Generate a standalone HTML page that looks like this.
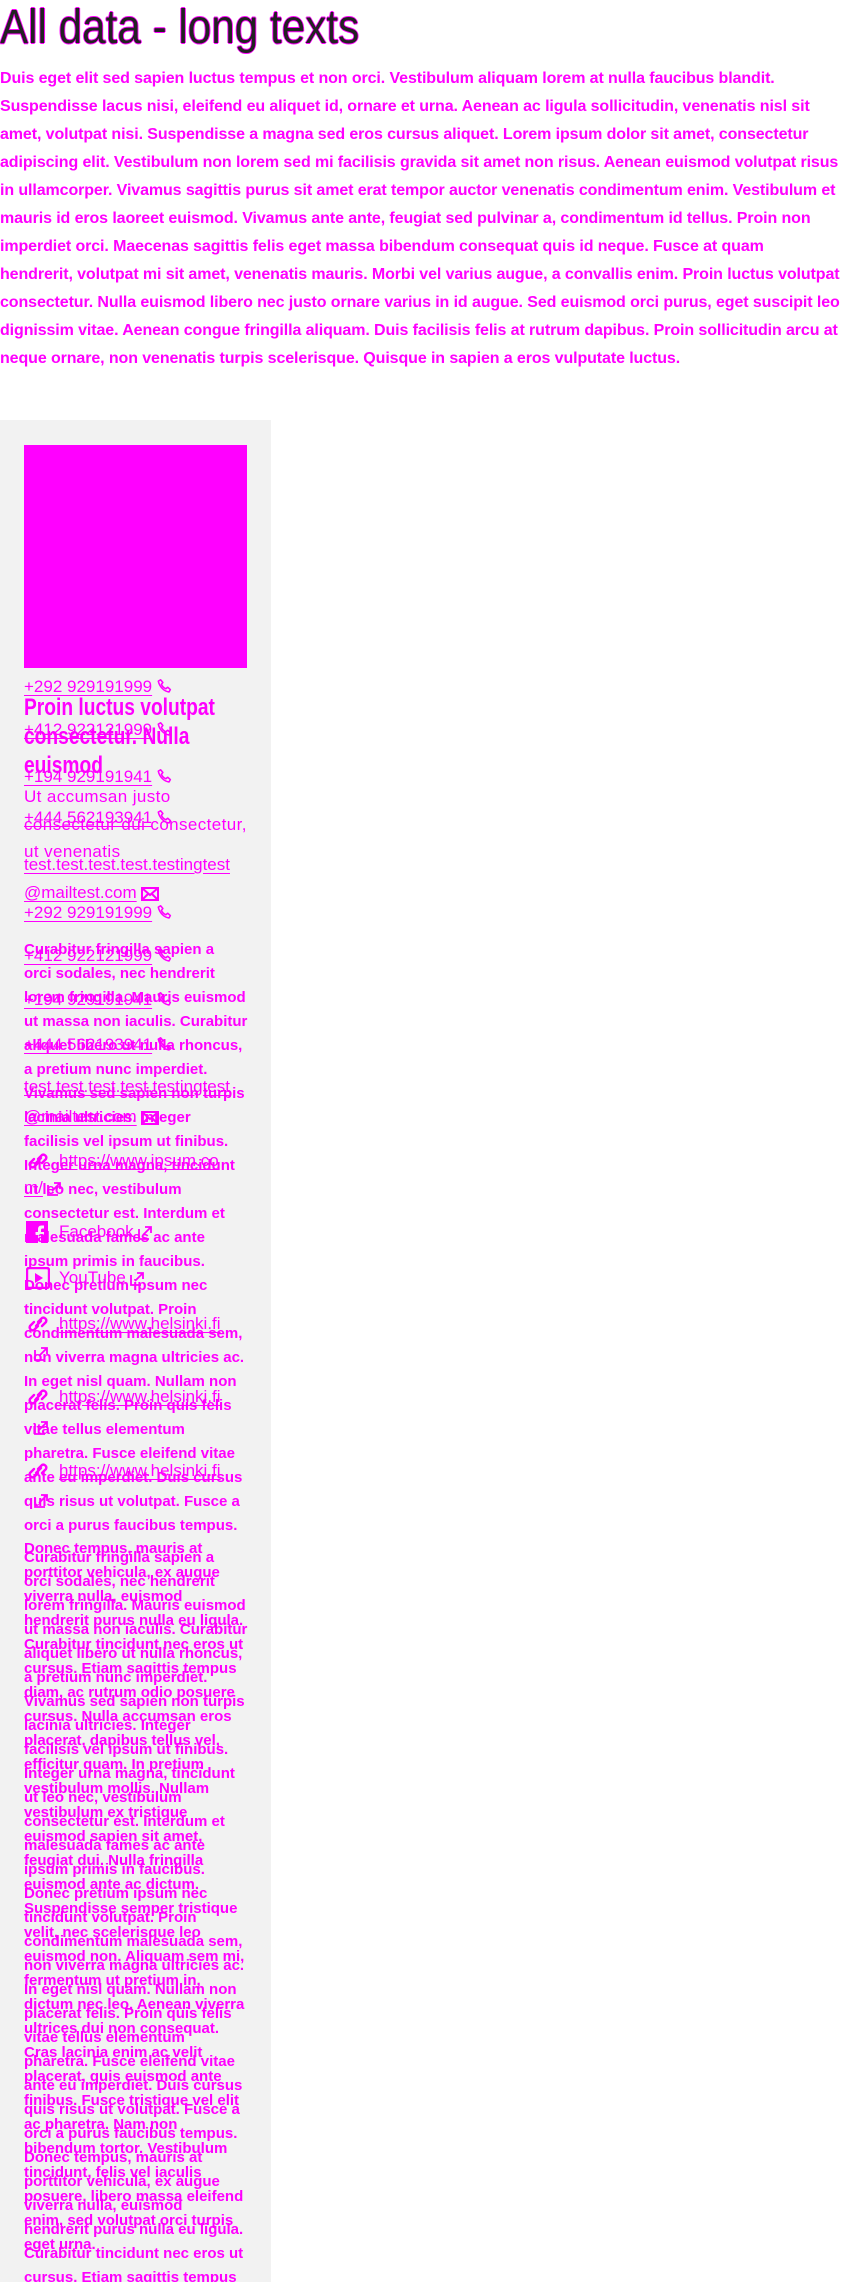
<!DOCTYPE html>
<html><head><meta charset="utf-8">
<style>
*{margin:0;padding:0;box-sizing:border-box}
html,body{width:860px;height:2282px;overflow:hidden;background:#fff}
body{position:relative;font-family:"Liberation Sans",sans-serif;color:#ff00ff}
h1{position:absolute;left:0;top:0;font-size:48px;font-weight:normal;line-height:56px;color:#222;white-space:nowrap;transform:scaleX(0.88);transform-origin:left top;
text-shadow:1px 0 #f0f,-1px 0 #f0f,0 1px #f0f,0 -1px #f0f}
.p{position:absolute;left:0;top:65px;font-size:16px;font-weight:bold;line-height:28px;white-space:nowrap;letter-spacing:-0.1px}
.card{position:absolute;left:0;top:420px;width:271px;height:1862px;background:#f2f2f2}
.img{position:absolute;left:24px;top:445px;width:223px;height:223px;background:#ff00ff}
.t{position:absolute;left:24px;white-space:nowrap}
.a{font-size:15px;line-height:24px;font-weight:bold}
.ttl{font-size:24px;font-weight:bold;line-height:29px;transform:scaleX(0.8);transform-origin:left top}
.ut{font-size:17px;line-height:27.5px;letter-spacing:0.4px}
.k{position:absolute;left:24px;font-size:17px;line-height:24px;height:24px;white-space:nowrap}
.k u{text-decoration:underline;text-underline-offset:3px}
.k svg{vertical-align:-3px;margin-left:4px}
.ico{position:absolute;left:26px}
</style></head><body>
<h1>All data - long texts</h1>
<div class="p">
Duis eget elit sed sapien luctus tempus et non orci. Vestibulum aliquam lorem at nulla faucibus blandit.<br>
Suspendisse lacus nisi, eleifend eu aliquet id, ornare et urna. Aenean ac ligula sollicitudin, venenatis nisl sit<br>
amet, volutpat nisi. Suspendisse a magna sed eros cursus aliquet. Lorem ipsum dolor sit amet, consectetur<br>
adipiscing elit. Vestibulum non lorem sed mi facilisis gravida sit amet non risus. Aenean euismod volutpat risus<br>
in ullamcorper. Vivamus sagittis purus sit amet erat tempor auctor venenatis condimentum enim. Vestibulum et<br>
mauris id eros laoreet euismod. Vivamus ante ante, feugiat sed pulvinar a, condimentum id tellus. Proin non<br>
imperdiet orci. Maecenas sagittis felis eget massa bibendum consequat quis id neque. Fusce at quam<br>
hendrerit, volutpat mi sit amet, venenatis mauris. Morbi vel varius augue, a convallis enim. Proin luctus volutpat<br>
consectetur. Nulla euismod libero nec justo ornare varius in id augue. Sed euismod orci purus, eget suscipit leo<br>
dignissim vitae. Aenean congue fringilla aliquam. Duis facilisis felis at rutrum dapibus. Proin sollicitudin arcu at<br>
neque ornare, non venenatis turpis scelerisque. Quisque in sapien a eros vulputate luctus.
</div>
<div class="card"></div>
<div class="img"></div>

<div class="t ttl" style="top:693px">Proin luctus volutpat<br>consectetur. Nulla<br>euismod</div>
<div class="t ut" style="top:783px">Ut accumsan justo<br>consectetur dui consectetur,<br>ut venenatis</div>

<div class="k" style="top:675px"><u>+292 929191999</u><svg width="17" height="17" viewBox="0 0 24 24"><path d="M6.5 2.5l3.2 3.8-2.1 2.6c1.3 2.9 3.4 5 6.3 6.3l2.6-2.1 3.8 3.2-1.9 3.4C11.5 19 5 12.5 3.2 4.4z" fill="none" stroke="#f0f" stroke-width="2.2" stroke-linejoin="round"/></svg></div>
<div class="k" style="top:718px"><u>+412 922121999</u><svg width="17" height="17" viewBox="0 0 24 24"><path d="M6.5 2.5l3.2 3.8-2.1 2.6c1.3 2.9 3.4 5 6.3 6.3l2.6-2.1 3.8 3.2-1.9 3.4C11.5 19 5 12.5 3.2 4.4z" fill="none" stroke="#f0f" stroke-width="2.2" stroke-linejoin="round"/></svg></div>
<div class="k" style="top:765px"><u>+194 929191941</u><svg width="17" height="17" viewBox="0 0 24 24"><path d="M6.5 2.5l3.2 3.8-2.1 2.6c1.3 2.9 3.4 5 6.3 6.3l2.6-2.1 3.8 3.2-1.9 3.4C11.5 19 5 12.5 3.2 4.4z" fill="none" stroke="#f0f" stroke-width="2.2" stroke-linejoin="round"/></svg></div>
<div class="k" style="top:806px"><u>+444 562193941</u><svg width="17" height="17" viewBox="0 0 24 24"><path d="M6.5 2.5l3.2 3.8-2.1 2.6c1.3 2.9 3.4 5 6.3 6.3l2.6-2.1 3.8 3.2-1.9 3.4C11.5 19 5 12.5 3.2 4.4z" fill="none" stroke="#f0f" stroke-width="2.2" stroke-linejoin="round"/></svg></div>
<div class="k" style="top:853px"><u>test.test.test.test.testingtest</u></div>
<div class="k" style="top:881px"><u>@mailtest.com</u><svg width="18" height="14" viewBox="0 0 18 14"><rect x="1" y="1" width="16" height="12" fill="none" stroke="#f0f" stroke-width="2"/><path d="M1 1l8 7 8-7M1 13l6-6M17 13l-6-6" fill="none" stroke="#f0f" stroke-width="2"/></svg></div>
<div class="k" style="top:901px"><u>+292 929191999</u><svg width="17" height="17" viewBox="0 0 24 24"><path d="M6.5 2.5l3.2 3.8-2.1 2.6c1.3 2.9 3.4 5 6.3 6.3l2.6-2.1 3.8 3.2-1.9 3.4C11.5 19 5 12.5 3.2 4.4z" fill="none" stroke="#f0f" stroke-width="2.2" stroke-linejoin="round"/></svg></div>
<div class="k" style="top:944px"><u>+412 922121999</u><svg width="17" height="17" viewBox="0 0 24 24"><path d="M6.5 2.5l3.2 3.8-2.1 2.6c1.3 2.9 3.4 5 6.3 6.3l2.6-2.1 3.8 3.2-1.9 3.4C11.5 19 5 12.5 3.2 4.4z" fill="none" stroke="#f0f" stroke-width="2.2" stroke-linejoin="round"/></svg></div>
<div class="k" style="top:988px"><u>+194 929191941</u><svg width="17" height="17" viewBox="0 0 24 24"><path d="M6.5 2.5l3.2 3.8-2.1 2.6c1.3 2.9 3.4 5 6.3 6.3l2.6-2.1 3.8 3.2-1.9 3.4C11.5 19 5 12.5 3.2 4.4z" fill="none" stroke="#f0f" stroke-width="2.2" stroke-linejoin="round"/></svg></div>
<div class="k" style="top:1033px"><u>+444 562193941</u><svg width="17" height="17" viewBox="0 0 24 24"><path d="M6.5 2.5l3.2 3.8-2.1 2.6c1.3 2.9 3.4 5 6.3 6.3l2.6-2.1 3.8 3.2-1.9 3.4C11.5 19 5 12.5 3.2 4.4z" fill="none" stroke="#f0f" stroke-width="2.2" stroke-linejoin="round"/></svg></div>
<div class="k" style="top:1075px"><u>test.test.test.test.testingtest</u></div>
<div class="k" style="top:1105px"><u>@mailtest.com</u><svg width="18" height="14" viewBox="0 0 18 14"><rect x="1" y="1" width="16" height="12" fill="none" stroke="#f0f" stroke-width="2"/><path d="M1 1l8 7 8-7M1 13l6-6M17 13l-6-6" fill="none" stroke="#f0f" stroke-width="2"/></svg></div>

<svg class="ico" style="top:1151px" width="24" height="20" viewBox="0 0 24 20"><path d="M10 12l5-5M8 8l-4 4a3 3 0 004 4l4-4M16 12l4-4a3 3 0 00-4-4l-4 4" fill="none" stroke="#f0f" stroke-width="2.4" stroke-linecap="round"/></svg>
<div class="k" style="top:1149px;left:59px"><u>https://www.ipsum.co</u></div>
<div class="k" style="top:1176px"><u>m/</u><svg width="14" height="14" viewBox="0 0 14 14"><path d="M1 3v10h10M5 9l8-8M7 1h6v6" fill="none" stroke="#f0f" stroke-width="1.8"/></svg></div>
<svg class="ico" style="top:1221px" width="22" height="22" viewBox="0 0 22 22"><rect width="22" height="22" fill="#f0f"/><path d="M15 22v-8h3v-3h-3V9c0-1 .5-1.5 1.5-1.5H18V4.5h-2.5C13 4.5 12 6 12 8.5V11H9.5v3H12v8" fill="#f2f2f2"/></svg>
<div class="k" style="top:1220px;left:59px">Facebook<svg width="14" height="14" viewBox="0 0 14 14"><path d="M1 3v10h10M5 9l8-8M7 1h6v6" fill="none" stroke="#f0f" stroke-width="1.8"/></svg></div>
<svg class="ico" style="top:1267px" width="24" height="22" viewBox="0 0 24 22"><rect x="1" y="1" width="22" height="20" rx="2" fill="none" stroke="#f0f" stroke-width="2.4"/><path d="M9 6v10l8-5z" fill="#f0f"/></svg>
<div class="k" style="top:1266px;left:59px">YouTube<svg width="14" height="14" viewBox="0 0 14 14"><path d="M1 3v10h10M5 9l8-8M7 1h6v6" fill="none" stroke="#f0f" stroke-width="1.8"/></svg></div>

<svg class="ico" style="top:1314px" width="24" height="20" viewBox="0 0 24 20"><path d="M10 12l5-5M8 8l-4 4a3 3 0 004 4l4-4M16 12l4-4a3 3 0 00-4-4l-4 4" fill="none" stroke="#f0f" stroke-width="2.4" stroke-linecap="round"/></svg>
<div class="k" style="top:1312px;left:59px"><u>https://www.helsinki.fi</u></div>
<div class="k" style="top:1341px;left:30px"><svg width="14" height="14" viewBox="0 0 14 14"><path d="M1 3v10h10M5 9l8-8M7 1h6v6" fill="none" stroke="#f0f" stroke-width="1.8"/></svg></div>
<svg class="ico" style="top:1387px" width="24" height="20" viewBox="0 0 24 20"><path d="M10 12l5-5M8 8l-4 4a3 3 0 004 4l4-4M16 12l4-4a3 3 0 00-4-4l-4 4" fill="none" stroke="#f0f" stroke-width="2.4" stroke-linecap="round"/></svg>
<div class="k" style="top:1385px;left:59px"><u>https://www.helsinki.fi</u></div>
<div class="k" style="top:1415px;left:30px"><svg width="14" height="14" viewBox="0 0 14 14"><path d="M1 3v10h10M5 9l8-8M7 1h6v6" fill="none" stroke="#f0f" stroke-width="1.8"/></svg></div>
<svg class="ico" style="top:1461px" width="24" height="20" viewBox="0 0 24 20"><path d="M10 12l5-5M8 8l-4 4a3 3 0 004 4l4-4M16 12l4-4a3 3 0 00-4-4l-4 4" fill="none" stroke="#f0f" stroke-width="2.4" stroke-linecap="round"/></svg>
<div class="k" style="top:1459px;left:59px"><u>https://www.helsinki.fi</u></div>
<div class="k" style="top:1488px;left:30px"><svg width="14" height="14" viewBox="0 0 14 14"><path d="M1 3v10h10M5 9l8-8M7 1h6v6" fill="none" stroke="#f0f" stroke-width="1.8"/></svg></div>

<div class="t a" style="top:938px">
Curabitur fringilla sapien a<br>orci sodales, nec hendrerit<br>lorem fringilla. Mauris euismod<br>ut massa non iaculis. Curabitur<br>aliquet libero ut nulla rhoncus,<br>a pretium nunc imperdiet.<br>Vivamus sed sapien non turpis<br>lacinia ultricies. Integer<br>facilisis vel ipsum ut finibus.<br>Integer urna magna, tincidunt<br>ut leo nec, vestibulum<br>consectetur est. Interdum et<br>malesuada fames ac ante<br>ipsum primis in faucibus.<br>Donec pretium ipsum nec<br>tincidunt volutpat. Proin<br>condimentum malesuada sem,<br>non viverra magna ultricies ac.<br>In eget nisl quam. Nullam non<br>placerat felis. Proin quis felis<br>vitae tellus elementum<br>pharetra. Fusce eleifend vitae<br>ante eu imperdiet. Duis cursus<br>quis risus ut volutpat. Fusce a<br>orci a purus faucibus tempus.
</div>
<div class="t a" style="top:1537px">
Donec tempus, mauris at<br>porttitor vehicula, ex augue<br>viverra nulla, euismod<br>hendrerit purus nulla eu ligula.<br>Curabitur tincidunt nec eros ut<br>cursus. Etiam sagittis tempus<br>diam, ac rutrum odio posuere<br>cursus. Nulla accumsan eros<br>placerat, dapibus tellus vel,<br>efficitur quam. In pretium<br>vestibulum mollis. Nullam<br>vestibulum ex tristique<br>euismod sapien sit amet,<br>feugiat dui. Nulla fringilla<br>euismod ante ac dictum.<br>Suspendisse semper tristique<br>velit, nec scelerisque leo<br>euismod non. Aliquam sem mi,<br>fermentum ut pretium in,<br>dictum nec leo. Aenean viverra<br>ultrices dui non consequat.<br>Cras lacinia enim ac velit<br>placerat, quis euismod ante<br>finibus. Fusce tristique vel elit<br>ac pharetra. Nam non<br>bibendum tortor. Vestibulum<br>tincidunt, felis vel iaculis<br>posuere, libero massa eleifend<br>enim, sed volutpat orci turpis<br>eget urna.
</div>
<div class="t a" style="top:1546px">
Curabitur fringilla sapien a<br>orci sodales, nec hendrerit<br>lorem fringilla. Mauris euismod<br>ut massa non iaculis. Curabitur<br>aliquet libero ut nulla rhoncus,<br>a pretium nunc imperdiet.<br>Vivamus sed sapien non turpis<br>lacinia ultricies. Integer<br>facilisis vel ipsum ut finibus.<br>Integer urna magna, tincidunt<br>ut leo nec, vestibulum<br>consectetur est. Interdum et<br>malesuada fames ac ante<br>ipsum primis in faucibus.<br>Donec pretium ipsum nec<br>tincidunt volutpat. Proin<br>condimentum malesuada sem,<br>non viverra magna ultricies ac.<br>In eget nisl quam. Nullam non<br>placerat felis. Proin quis felis<br>vitae tellus elementum<br>pharetra. Fusce eleifend vitae<br>ante eu imperdiet. Duis cursus<br>quis risus ut volutpat. Fusce a<br>orci a purus faucibus tempus.<br>Donec tempus, mauris at<br>porttitor vehicula, ex augue<br>viverra nulla, euismod<br>hendrerit purus nulla eu ligula.<br>Curabitur tincidunt nec eros ut<br>cursus. Etiam sagittis tempus
</div>
</body></html>
